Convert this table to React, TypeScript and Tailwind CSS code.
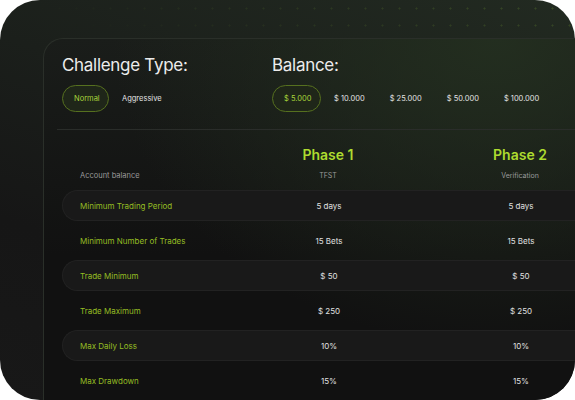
import React from "react";

const rows = [
  ["Minimum Trading Period", "5 days", "5 days"],
  ["Minimum Number of Trades", "15 Bets", "15 Bets"],
  ["Trade Minimum", "$ 50", "$ 50"],
  ["Trade Maximum", "$ 250", "$ 250"],
  ["Max Daily Loss", "10%", "10%"],
  ["Max Drawdown", "15%", "15%"],
];

const balances = ["$ 10.000", "$ 25.000", "$ 50.000", "$ 100.000"];

export default function App() {
  return (
    <div className="w-[575px] h-[400px] bg-white" style={{ fontFamily: "Inter, 'Noto Sans', sans-serif" }}>
      <div className="relative w-full h-full rounded-[40px] overflow-hidden bg-[linear-gradient(200deg,#222a21_0%,#1b1f1b_40%,#161616_70%,#181818_100%)]">
        <div className="absolute inset-0 bg-[radial-gradient(circle,rgba(110,150,50,0.3)_0.8px,transparent_1.3px)] bg-[length:17px_17px] [mask-image:linear-gradient(200deg,black,transparent_35%)]" />
        <div className="relative ml-[43px] mt-[38px] h-[362px] rounded-tl-[20px] border-l border-t border-[#2a2f29] bg-[radial-gradient(ellipse_at_85%_0%,rgba(36,48,32,0.9),transparent_60%),linear-gradient(to_bottom,#1a1d1a_0%,#141514_40%,#111111_60%,#111111_100%)]">
          <div className="flex pl-[18px] pt-[14px]">
            <div className="w-[210px]">
              <div className="text-[17px] leading-[24px] text-[#ececec] tracking-[-0.3px]">Challenge Type:</div>
              <div className="mt-[8px] flex items-center">
                <div className="h-[27px] w-[47px] pl-[11px] flex items-center rounded-full border border-[#56701f] bg-[#1f2619] text-[7.5px] text-[#a8d43a]">Normal</div>
                <div className="pl-[13px] text-[7.5px] text-[#e2e2e2]">Aggressive</div>
              </div>
            </div>
            <div>
              <div className="text-[17px] leading-[24px] text-[#ececec] tracking-[-0.3px]">Balance:</div>
              <div className="mt-[8px] flex items-center gap-[1px]">
                <div className="h-[27px] w-[49px] pl-[11px] flex items-center rounded-full border border-[#56701f] bg-[#1f2619] text-[7.5px] text-[#a8d43a]">$ 5.000</div>
                {balances.map((b) => (
                  <div key={b} className="px-[12px] text-[7.5px] text-[#e2e2e2]">{b}</div>
                ))}
              </div>
            </div>
          </div>
          <div className="ml-[13px] mt-[17px] border-t border-[#2a2d2a]" />
          <div className="ml-[18px] w-[554px]">
            <div className="grid grid-cols-[170px_192px_192px] items-end h-[55px] pb-[4px]">
              <div className="pl-[18px] text-[7.5px] text-[#9a9a9a]">Account balance</div>
              <div className="flex flex-col items-center">
                <div className="text-[14px] font-semibold text-[#addb2f] leading-[18px]">Phase 1</div>
                <div className="mt-[7px] text-[7px] text-[#9a9a9a]">TFST</div>
              </div>
              <div className="flex flex-col items-center">
                <div className="text-[14px] font-semibold text-[#addb2f] leading-[18px]">Phase 2</div>
                <div className="mt-[7px] text-[7px] text-[#9a9a9a]">Verification</div>
              </div>
            </div>
            <div className="mt-[5px] flex flex-col gap-[4px]">
              {rows.map((r, i) => (
                <div
                  key={r[0]}
                  className={
                    i % 2 === 0
                      ? "grid grid-cols-[170px_192px_192px] items-center h-[31px] rounded-l-full border border-r-0 border-[#222222] bg-[#191919]"
                      : "grid grid-cols-[170px_192px_192px] items-center h-[31px] border border-transparent"
                  }
                >
                  <div className="pl-[17px] text-[8px] text-[#95bd23]">{r[0]}</div>
                  <div className="text-center text-[8px] text-[#e0e0e0]">{r[1]}</div>
                  <div className="text-center text-[8px] text-[#e0e0e0]">{r[2]}</div>
                </div>
              ))}
            </div>
          </div>
        </div>
      </div>
    </div>
  );
}
